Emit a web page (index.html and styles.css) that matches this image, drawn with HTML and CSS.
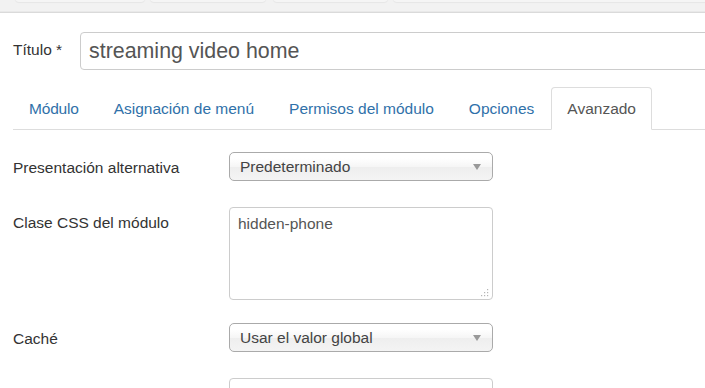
FILE: index.html
```html
<!DOCTYPE html>
<html lang="es">
<head>
<meta charset="utf-8">
<title>Módulo</title>
<link rel="stylesheet" href="styles.css">
</head>
<body>
<div class="topbar">
  <div class="tb-btn tb-1"></div>
  <div class="tb-btn tb-2"></div>
  <div class="tb-btn tb-3"></div>
  <div class="tb-btn tb-4"></div>
</div>
<div class="page">
  <div class="title-row">
    <label class="title-label">Título *</label>
    <div class="title-input">streaming video home</div>
  </div>
  <ul class="tabs">
    <li class="tab">Módulo</li>
    <li class="tab">Asignación de menú</li>
    <li class="tab">Permisos del módulo</li>
    <li class="tab">Opciones</li>
    <li class="tab active">Avanzado</li>
  </ul>
  <div class="form">
    <div class="row">
      <div class="label">Presentación alternativa</div>
      <div class="select"><span>Predeterminado</span><i class="arrow"></i></div>
    </div>
    <div class="row row-ta">
      <div class="label">Clase CSS del módulo</div>
      <div class="textarea">hidden-phone
        <svg class="grip" width="9" height="9" viewBox="0 0 9 9"><g fill="#b5b5b5"><rect x="7" y="1" width="1.2" height="1.2"/><rect x="4" y="4" width="1.2" height="1.2"/><rect x="7" y="4" width="1.2" height="1.2"/><rect x="1" y="7" width="1.2" height="1.2"/><rect x="4" y="7" width="1.2" height="1.2"/><rect x="7" y="7" width="1.2" height="1.2"/></g></svg>
      </div>
    </div>
    <div class="row">
      <div class="label">Caché</div>
      <div class="select"><span>Usar el valor global</span><i class="arrow"></i></div>
    </div>
    <div class="row">
      <div class="label">Duración de la caché</div>
      <div class="input">900</div>
    </div>
  </div>
</div>
</body>
</html>
```
FILE: styles.css
```css
html, body {
  margin: 0;
  padding: 0;
  background: #fff;
  overflow: hidden;
  height: 388px;
}
body {
  font-family: "Liberation Sans", Arial, sans-serif;
  color: #333;
  font-size: 15.5px;
}
.topbar {
  height: 12px;
  background: #f2f2f2;
  border-bottom: 1px solid #dadada;
  box-shadow: inset 0 -1px 0 #e9e9e9;
  display: flex;
  align-items: flex-end;
  padding-left: 15px;
  gap: 5px;
  overflow: hidden;
}
.tb-btn {
  height: 30px;
  margin-bottom: 10px;
  background: #f5f5f5;
  border-radius: 0 0 4px 4px;
  box-shadow: 0 1px 1px rgba(0,0,0,0.05);
  flex: none;
}
.tb-1 { width: 130px; }
.tb-2 { width: 116px; }
.tb-3 { width: 115px; margin-left: 2px; }
.tb-4 { width: 330px; }
.page {
  padding-left: 13px;
}
.title-row {
  display: flex;
  align-items: center;
  margin-top: 19px;
  height: 38px;
}
.title-label {
  width: 67px;
  flex: none;
  font-size: 15.5px;
  color: #333;
  position: relative;
  top: -1px;
}
.title-input {
  flex: none;
  width: 700px;
  border: 1px solid #ccc;
  border-radius: 4px;
  box-sizing: border-box;
  height: 38px;
  padding: 0 8px;
  line-height: 36px;
  font-size: 21.4px;
  color: #555;
}
.tabs {
  list-style: none;
  margin: 17px 0 0 0;
  padding: 0;
  display: flex;
  gap: 3px;
  border-bottom: 1px solid #ddd;
  height: 42px;
}
.tab {
  padding: 0 15px;
  height: 42px;
  line-height: 42px;
  color: #3071a9;
  box-sizing: border-box;
  border: 1px solid transparent;
  border-radius: 4px 4px 0 0;
}
.tab:first-child {
  letter-spacing: -0.2px;
}
.tab.active {
  color: #555;
  background: #fff;
  border-color: #ddd #ddd transparent #ddd;
  height: 43px;
  margin-left: -2px;
}
.form {
  margin-top: 22px;
}
.row {
  display: flex;
  align-items: flex-start;
  margin-bottom: 26px;
}
.row-ta {
  margin-bottom: 23px;
}
.label {
  width: 216px;
  flex: none;
  padding-top: 6px;
  line-height: 20px;
  color: #333;
}
.select {
  width: 264px;
  height: 29px;
  box-sizing: border-box;
  border: 1px solid #aaa;
  border-radius: 5px;
  background: linear-gradient(#fff 20%, #f6f6f6 50%, #eee 52%, #f4f4f4 100%);
  display: flex;
  align-items: center;
  justify-content: space-between;
  padding: 0 11px 0 10px;
  color: #444;
  line-height: 27px;
}
.arrow {
  width: 0;
  height: 0;
  border-left: 4px solid transparent;
  border-right: 4px solid transparent;
  border-top: 6px solid #999;
  display: block;
}
.textarea {
  position: relative;
  width: 264px;
  height: 93px;
  box-sizing: border-box;
  border: 1px solid #ccc;
  border-radius: 4px;
  padding: 6px 8px;
  line-height: 20px;
  color: #555;
}
.grip {
  position: absolute;
  right: 3px;
  bottom: 2px;
}
.input {
  width: 264px;
  height: 30px;
  box-sizing: border-box;
  border: 1px solid #ccc;
  border-radius: 4px;
  padding: 0 8px;
  line-height: 28px;
  color: #555;
}
```
